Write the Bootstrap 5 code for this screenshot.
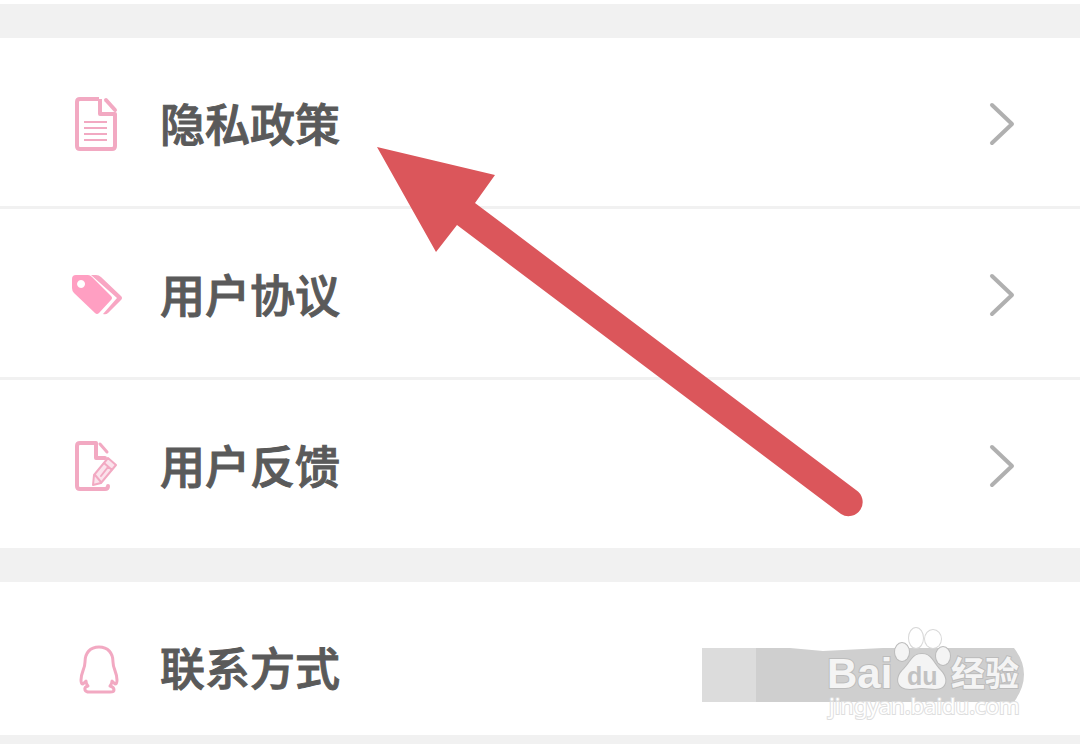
<!DOCTYPE html>
<html lang="zh-CN">
<head>
<meta charset="utf-8">
<meta name="viewport" content="width=device-width, initial-scale=1">
<title>设置</title>
<link href="https://cdn.jsdelivr.net/npm/bootstrap@5.3.0/dist/css/bootstrap.min.css" rel="stylesheet">
<style>
body { font-family: "Liberation Sans", "Noto Sans CJK SC", sans-serif; background: #f1f1f1; }
.top-edge { height: 4px; background: #fff; }
.settings { margin-top: 34px; }
.settings .list-group-item { min-height: 171px; padding: 4px 64px 0 72px; border-width: 0 0 3px; border-color: #f1f1f1; color: #5a5a5a; background: #fff; }
.settings .list-group-item:last-child { min-height: 168px; border-bottom: 0; }
.settings.contact .list-group-item { min-height: 153px; padding-top: 20px; }
.item-icon { width: 50px; height: 60px; margin-right: 38px; }
.item-label { font-size: 45px; line-height: 60px; padding-top: 5px; font-weight: 500; -webkit-text-stroke: 1px #5a5a5a; }
.chevron { width: 28px; height: 44px; }
.arrow { left: 371px; top: 141px; }
.watermark { right: 50px; bottom: 9px; }
</style>
</head>
<body>
<main class="position-relative overflow-hidden">
  <div class="top-edge"></div>
  <nav class="settings list-group list-group-flush" aria-label="协议与反馈">
    <a href="#privacy" class="list-group-item d-flex align-items-center">
      <svg class="item-icon flex-shrink-0" viewBox="0 0 50 60" fill="none" stroke="#f2a9c2" aria-hidden="true">
        <path d="M27 5H8q-3 0-3 3v44q0 3 3 3h32q3 0 3-3V20H28V5" stroke-width="4" stroke-linejoin="round"/>
        <path d="M34 6l9 10" stroke-width="4" stroke-linecap="round"/>
        <path d="M12 28h23M12 34h23M12 40h23M12 46h23" stroke-width="2"/>
      </svg>
      <span class="item-label">隐私政策</span>
      <svg class="chevron ms-auto flex-shrink-0" viewBox="0 0 28 44" fill="none" stroke="#b0b0b0" stroke-width="4" stroke-linecap="round" stroke-linejoin="round" aria-hidden="true"><path d="M4 3l20 19L4 41"/></svg>
    </a>
    <a href="#terms" class="list-group-item d-flex align-items-center">
      <svg class="item-icon flex-shrink-0" viewBox="0 0 50 60" aria-hidden="true">
        <path fill="#ff9fc2" fill-rule="evenodd" d="M4 10h12q2 0 4 2l19 19q2 2 0 4L27 48q-2 2-4 0L2 28q-2-2-2-5V14q0-4 4-4ZM9 15a4 4 0 1 0 .1 0Z"/>
        <path fill="#f8a6c3" d="M19 10h5q3 0 5 2l20 19q2 2 0 4L36 48q-2 2-5 1l14-16Z"/>
      </svg>
      <span class="item-label">用户协议</span>
      <svg class="chevron ms-auto flex-shrink-0" viewBox="0 0 28 44" fill="none" stroke="#b0b0b0" stroke-width="4" stroke-linecap="round" stroke-linejoin="round" aria-hidden="true"><path d="M4 3l20 19L4 41"/></svg>
    </a>
    <a href="#feedback" class="list-group-item d-flex align-items-center">
      <svg class="item-icon flex-shrink-0" viewBox="0 0 50 60" fill="none" stroke="#f2a9c2" stroke-width="4" stroke-linecap="round" stroke-linejoin="round" aria-hidden="true">
        <path d="M33 22H24V7H8q-3 0-3 3v40q0 3 3 3h25q3 0 3-3"/>
        <path d="M28 8l7 8" stroke-width="3"/>
        <path fill="#fbe3ec" stroke-width="2" d="M36 22l8 7-15 18-8 2 1-10ZM23 39l6 7M32 27l8 7M36 31l-7 9"/>
      </svg>
      <span class="item-label">用户反馈</span>
      <svg class="chevron ms-auto flex-shrink-0" viewBox="0 0 28 44" fill="none" stroke="#b0b0b0" stroke-width="4" stroke-linecap="round" stroke-linejoin="round" aria-hidden="true"><path d="M4 3l20 19L4 41"/></svg>
    </a>
  </nav>
  <nav class="settings contact list-group list-group-flush" aria-label="联系">
    <a href="#contact" class="list-group-item d-flex align-items-center">
      <svg class="item-icon flex-shrink-0" viewBox="0 0 50 60" fill="none" stroke="#f2a9c2" stroke-width="3" stroke-linejoin="round" stroke-linecap="round" aria-hidden="true">
        <path d="M27 8C18 8 13 14 13 23c0 7-4 10-4 18q0 4 2 4l3-3q0 3 2 5-4 1-3 4 1 2 4 2h21q4 0 4-2 0-3-4-4 2-2 2-5l3 3q2 0 2-4c0-8-4-11-4-18C41 14 36 8 27 8Z"/>
      </svg>
      <span class="item-label">联系方式</span>
    </a>
  </nav>

  <svg class="arrow position-absolute pe-none" width="500" height="384" viewBox="0 0 500 384" aria-hidden="true">
    <path fill="#db565b" d="M6 6l118 28-20 28 381 287a14 14 0 0 1-15 24L86 84 65 111Z"/>
  </svg>
</main>
<div class="position-relative">
  <svg class="watermark position-absolute pe-none" width="330" height="100" viewBox="0 0 330 100" role="img" aria-label="Baidu 经验">
    <path fill="#dcdcdc" d="M2 22h54v54H2Z"/>
    <path fill="#cfcfcf" d="M56 22h34l33 3 60-3h131q20 26 0 54H56Z"/>
    <g fill="#f4f4f4" stroke="#bcbcbc" stroke-width="2" paint-order="stroke">
      <text x="127" y="62" font-size="42" font-weight="700" font-family="Liberation Sans, sans-serif">Bai</text>
      <ellipse cx="202" cy="26" rx="7" ry="9"/>
      <ellipse cx="216" cy="12" rx="7" ry="10" fill="#fff" stroke="#d8d8d8"/>
      <ellipse cx="233" cy="13" rx="8" ry="9" fill="#fff" stroke="#d8d8d8"/>
      <ellipse cx="243" cy="30" rx="7" ry="9"/>
      <path d="M222 28c9 0 11 8 17 15 10 9 8 20-4 20-5 0-8-1-13-1s-7 1-12 1c-14 0-15-12-6-20 7-7 8-15 18-15Z"/>
      <text x="251" y="60" font-size="34" font-weight="700" font-family="Noto Sans CJK SC, sans-serif">经验</text>
    </g>
    <text x="207" y="59" font-size="25" font-weight="700" fill="#c2c2c2" font-family="Liberation Sans, sans-serif">du</text>
    <text x="129" y="88" font-size="22" fill="#fff" stroke="#dedede" stroke-width="2" paint-order="stroke" font-family="Noto Sans, sans-serif">jingyan.baidu.com</text>
  </svg>
</div>
<script src="https://cdn.jsdelivr.net/npm/bootstrap@5.3.0/dist/js/bootstrap.bundle.min.js"></script>
</body>
</html>
